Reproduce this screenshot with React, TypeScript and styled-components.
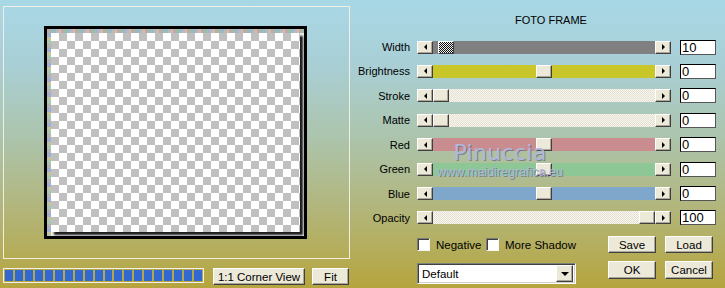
import React from "react";
import styled, { createGlobalStyle } from "styled-components";

const GlobalStyle = createGlobalStyle`
  html, body {
    margin: 0;
    padding: 0;
  }
  body {
    font-family: "Liberation Sans", Arial, sans-serif;
    font-size: 11px;
    color: #000;
  }
`;

const Dialog = styled.div`
  position: relative;
  width: 725px;
  height: 288px;
  display: flex;
  overflow: hidden;
  background: linear-gradient(
    180deg,
    #a8d8e6 0%,
    #a9cfd6 22%,
    #acc4ac 48%,
    #b2b67c 72%,
    #b6a53e 100%
  );
`;

const LeftPanel = styled.div`
  width: 353px;
  padding: 6px 0 0 3px;
  box-sizing: border-box;
  display: flex;
  flex-direction: column;
`;

const PreviewFrame = styled.div`
  width: 347px;
  height: 253px;
  box-sizing: border-box;
  border: 1px solid #f2eee2;
  padding: 19px 0 0 40px;
`;

const Photo = styled.div`
  width: 263px;
  height: 213px;
  box-sizing: border-box;
  border: 3px solid #000;
  padding: 4px 0 0 4px;
  background:
    repeating-linear-gradient(90deg, #c7a3b4 0 3px, #93c49e 3px 6px, #a3b3d6 6px 9px, #b9b9b9 9px 12px, #c9c29a 12px 14px)
      top left / 100% 4px no-repeat,
    repeating-linear-gradient(180deg, #b4b4b4 0 4px, #9fb0d4 4px 8px, #c8c49a 8px 11px, #a9c8b0 11px 15px)
      top left / 4px 100% no-repeat,
    #ececec;
`;

const Checker = styled.div`
  width: 249px;
  height: 199px;
  background: repeating-conic-gradient(#c0c0c0 0 25%, #ffffff 0 50%) 0 0 / 16px 16px;
  box-shadow: 3px 3px 2px #1c1c1c;
`;

const BottomBar = styled.div`
  display: flex;
  align-items: flex-start;
  margin-top: 9px;
`;

const Progress = styled.div`
  width: 201px;
  height: 15px;
  box-sizing: border-box;
  border: 1px solid #f2f0ea;
  padding: 1px;
  display: flex;
  gap: 2px;
  margin-right: 9px;
`;

const Block = styled.div`
  width: 8px;
  background: #3168d2;
`;

const Button = styled.button<{ $w: number; $h?: number }>`
  width: ${(p) => p.$w}px;
  height: ${(p) => p.$h ?? 17}px;
  padding: 0;
  box-sizing: border-box;
  font: 11.5px "Liberation Sans", Arial, sans-serif;
  color: #000;
  background: #ece9d8;
  border: 1px solid;
  border-color: #ffffff #404040 #404040 #ffffff;
  box-shadow: inset -1px -1px #aca899;
`;

const RightPanel = styled.div`
  flex: 1;
  display: flex;
  flex-direction: column;
  padding-top: 14px;
`;

const Title = styled.div`
  height: 20.8px;
  padding-left: 162px;
  line-height: 13px;
`;

const Row = styled.div`
  display: flex;
  align-items: center;
  height: 24.43px;
`;

const Label = styled.div`
  width: 57px;
  margin-right: 7px;
  text-align: right;
  white-space: nowrap;
`;

const Scroll = styled.div`
  display: flex;
  width: 254px;
  height: 13px;
`;

const ArrowBtn = styled.div`
  width: 16px;
  height: 13px;
  box-sizing: border-box;
  background: #ece9d8;
  border: 1px solid;
  border-color: #ffffff #404040 #404040 #ffffff;
  box-shadow: inset -1px -1px #aca899;
  display: flex;
  align-items: center;
  justify-content: center;
`;

const Arrow = styled.span<{ $dir: "left" | "right" }>`
  width: 0;
  height: 0;
  border-top: 3px solid transparent;
  border-bottom: 3px solid transparent;
  ${(p) =>
    p.$dir === "left"
      ? "border-right: 3px solid #000;"
      : "border-left: 3px solid #000;"}
`;

const Track = styled.div<{ $bg: string }>`
  position: relative;
  flex: 1;
  background: ${(p) => p.$bg};
`;

const Thumb = styled.div<{ $pos: number; $focus?: boolean }>`
  position: absolute;
  top: 0;
  left: ${(p) => Math.round(p.$pos * 206)}px;
  width: 16px;
  height: 13px;
  box-sizing: border-box;
  border: 1px solid;
  border-color: #ffffff #404040 #404040 #ffffff;
  background: ${(p) =>
    p.$focus
      ? "repeating-conic-gradient(#111 0 25%, #f0f0f0 0 50%) 0 0 / 2px 2px"
      : "#ece9d8"};
  box-shadow: ${(p) => (p.$focus ? "none" : "inset -1px -1px #aca899")};
`;

const ValueBox = styled.div`
  margin-left: 9px;
  width: 36px;
  height: 15px;
  box-sizing: border-box;
  background: #fff;
  border: 1px solid #000;
  border-right-color: #555;
  border-bottom-color: #555;
  font-size: 13px;
  line-height: 13px;
  padding-left: 1px;
`;

const Controls = styled.div`
  margin-left: 64px;
  margin-top: 6px;
  display: flex;
  flex-direction: column;
  gap: 8px;
`;

const ControlRow = styled.div`
  display: flex;
  align-items: flex-start;
`;

const LeftGroup = styled.div`
  width: 159px;
  margin-right: 32px;
  display: flex;
  align-items: center;
  height: 17px;
`;

const CheckItem = styled.label<{ $w?: number }>`
  display: flex;
  align-items: center;
  gap: 6px;
  width: ${(p) => (p.$w ? `${p.$w}px` : "auto")};
  white-space: nowrap;
  font-size: 11.5px;
`;

const CheckBox = styled.span`
  width: 13px;
  height: 13px;
  box-sizing: border-box;
  background: #fff;
  border: 1px solid;
  border-color: #7a7a7a #f6f6f6 #f6f6f6 #7a7a7a;
  box-shadow: inset 1px 1px #404040;
`;

const Select = styled.div`
  width: 159px;
  height: 21px;
  margin-top: 2px;
  margin-right: 32px;
  box-sizing: border-box;
  background: #fff;
  border: 1px solid;
  border-color: #808080 #ffffff #ffffff #808080;
  box-shadow: inset 1px 1px #404040, inset -1px -1px #d4d0c8;
  display: flex;
  align-items: center;
  justify-content: space-between;
  padding: 0 2px 0 4px;
  font-size: 11.5px;
`;

const SelectBtn = styled.div`
  width: 17px;
  height: 17px;
  box-sizing: border-box;
  background: #ece9d8;
  border: 1px solid;
  border-color: #ffffff #404040 #404040 #ffffff;
  box-shadow: inset -1px -1px #aca899;
  display: flex;
  align-items: center;
  justify-content: center;
`;

const DownArrow = styled.span`
  width: 0;
  height: 0;
  border-left: 4px solid transparent;
  border-right: 4px solid transparent;
  border-top: 4px solid #000;
`;

const Spacer = styled.div<{ $w?: number }>`
  width: ${(p) => p.$w ?? 9}px;
`;

const Watermark = styled.div`
  position: absolute;
  left: 436px;
  top: 141px;
  display: flex;
  flex-direction: column;
  align-items: center;
  width: 128px;
  pointer-events: none;
  color: #b2b6d8;
  text-shadow: 1px 1px 0 rgba(80, 86, 124, 0.6);
`;

const MarkName = styled.div`
  font: 22px "DejaVu Sans", "Liberation Sans", sans-serif;
  letter-spacing: 0.3px;
  line-height: 24px;
`;

const MarkUrl = styled.div`
  font: 12.5px "Liberation Sans", Arial, sans-serif;
  line-height: 14px;
`;

const dither = (a: string, b: string) =>
  `repeating-conic-gradient(${a} 0 25%, ${b} 0 50%) 0 0 / 2px 2px`;

const sliders = [
  { label: "Width", bg: "#808080", pos: 0.025, value: "10", focus: true },
  { label: "Brightness", bg: "#c9c62a", pos: 0.5, value: "0" },
  { label: "Stroke", bg: dither("#f8f6ee", "#e4e1d2"), pos: 0, value: "0" },
  { label: "Matte", bg: dither("#f8f6ee", "#e4e1d2"), pos: 0, value: "0" },
  { label: "Red", bg: "#c98d8f", pos: 0.5, value: "0" },
  { label: "Green", bg: "#8dc795", pos: 0.5, value: "0" },
  { label: "Blue", bg: "#7fa6cb", pos: 0.5, value: "0" },
  { label: "Opacity", bg: dither("#f8f6ee", "#e4e1d2"), pos: 1, value: "100" },
];

export default function App() {
  return (
    <>
      <GlobalStyle />
      <Dialog>
        <LeftPanel>
          <PreviewFrame>
            <Photo>
              <Checker />
            </Photo>
          </PreviewFrame>
          <BottomBar>
            <Progress>
              {Array.from({ length: 20 }).map((_, i) => (
                <Block key={i} />
              ))}
            </Progress>
            <Button $w={92}>1:1 Corner View</Button>
            <Spacer $w={7} />
            <Button $w={37}>Fit</Button>
          </BottomBar>
        </LeftPanel>

        <RightPanel>
          <Title>FOTO FRAME</Title>
          {sliders.map((s) => (
            <Row key={s.label}>
              <Label>{s.label}</Label>
              <Scroll>
                <ArrowBtn>
                  <Arrow $dir="left" />
                </ArrowBtn>
                <Track $bg={s.bg}>
                  <Thumb $pos={s.pos} $focus={s.focus} />
                </Track>
                <ArrowBtn>
                  <Arrow $dir="right" />
                </ArrowBtn>
              </Scroll>
              <ValueBox>{s.value}</ValueBox>
            </Row>
          ))}

          <Controls>
            <ControlRow>
              <LeftGroup>
                <CheckItem $w={76}>
                  <CheckBox />
                  Negative
                </CheckItem>
                <CheckItem>
                  <CheckBox />
                  More Shadow
                </CheckItem>
              </LeftGroup>
              <Button $w={48}>Save</Button>
              <Spacer />
              <Button $w={48}>Load</Button>
            </ControlRow>
            <ControlRow>
              <Select>
                <span>Default</span>
                <SelectBtn>
                  <DownArrow />
                </SelectBtn>
              </Select>
              <Button $w={48} $h={18}>
                OK
              </Button>
              <Spacer />
              <Button $w={48} $h={18}>
                Cancel
              </Button>
            </ControlRow>
          </Controls>
        </RightPanel>

        <Watermark>
          <MarkName>Pinuccia</MarkName>
          <MarkUrl>www.maidiregrafica.eu</MarkUrl>
        </Watermark>
      </Dialog>
    </>
  );
}
